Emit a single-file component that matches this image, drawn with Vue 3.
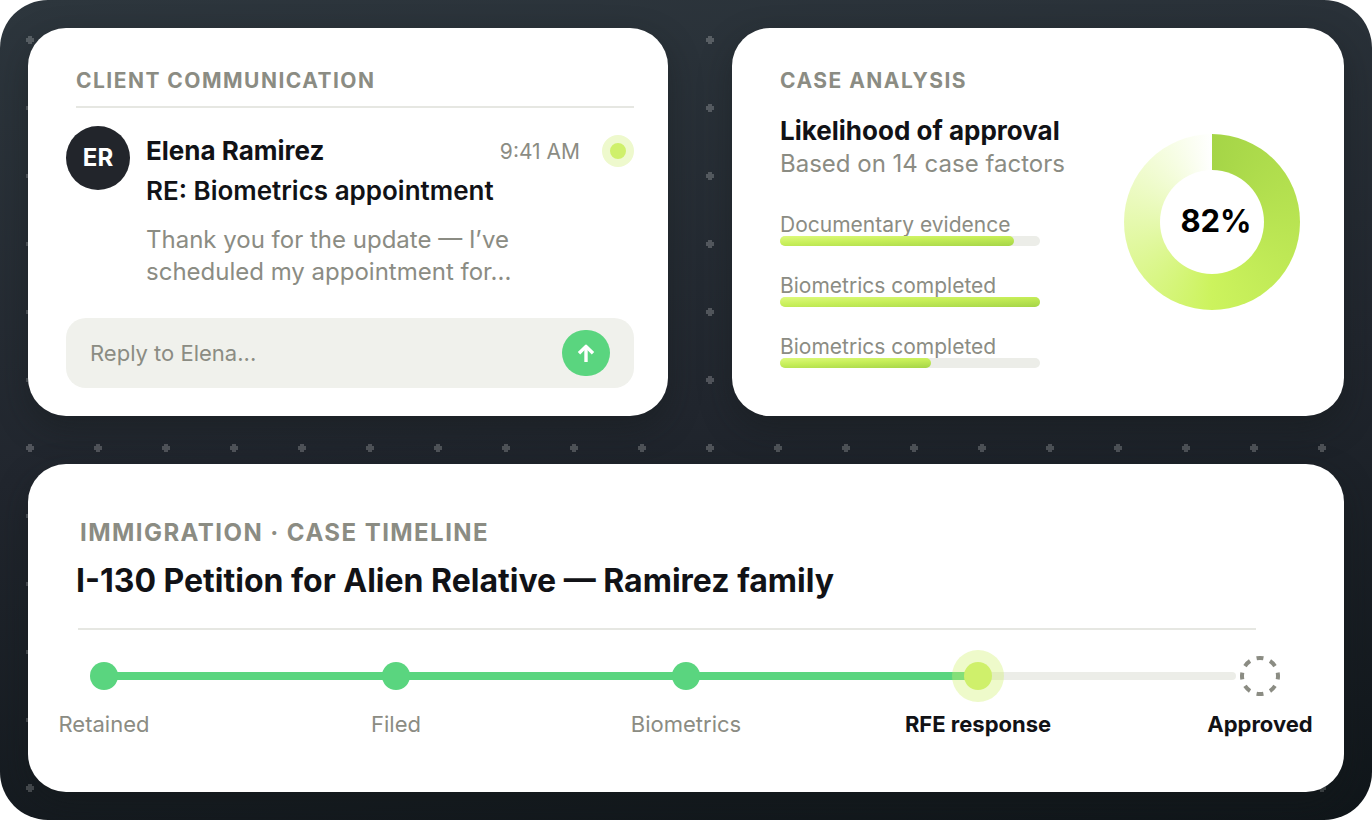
<script setup>
const factors = [
  { label: 'Documentary evidence', value: 90 },
  { label: 'Biometrics completed', value: 100 },
  { label: 'Biometrics completed', value: 58 },
]

const steps = [
  { label: 'Retained', state: 'done' },
  { label: 'Filed', state: 'done' },
  { label: 'Biometrics', state: 'done' },
  { label: 'RFE response', state: 'current' },
  { label: 'Approved', state: 'pending' },
]

const railProgress = 77
</script>

<template>
  <main class="board">
    <svg class="dots" aria-hidden="true">
      <defs>
        <pattern id="dot-grid" x="26" y="36" width="68" height="68" patternUnits="userSpaceOnUse">
          <path d="M2 0h4v2h2v4h-2v2h-4v-2h-2v-4h2z" fill="#fff" fill-opacity="0.22" shape-rendering="crispEdges" />
        </pattern>
      </defs>
      <rect width="100%" height="100%" fill="url(#dot-grid)" />
    </svg>

    <section class="card messages">
      <h2 class="eyebrow messages-title">Client communication</h2>
      <article class="message">
        <div class="avatar">ER</div>
        <div class="message-body">
          <div class="message-top">
            <h3 class="sender">Elena Ramirez</h3>
            <time class="time">9:41 AM</time>
            <span class="unread"></span>
          </div>
          <p class="subject">RE: Biometrics appointment</p>
          <p class="preview">Thank you for the update — I’ve<br />scheduled my appointment for...</p>
        </div>
      </article>
      <form class="reply" @submit.prevent>
        <input class="reply-input" type="text" aria-label="Reply to Elena" placeholder="Reply to Elena..." />
        <button class="send" type="submit" aria-label="Send reply">
          <svg width="20" height="20" viewBox="0 0 20 20" fill="none" stroke="#fff" stroke-width="3.4" aria-hidden="true">
            <path d="M10 19V3.5" />
            <path d="M3 10.3L10 3.4l7 6.9" stroke-linejoin="round" />
          </svg>
        </button>
      </form>
    </section>

    <section class="card analysis">
      <div class="analysis-main">
        <h2 class="eyebrow">Case analysis</h2>
        <h3 class="analysis-title">Likelihood of approval</h3>
        <p class="analysis-note">Based on 14 case factors</p>
        <ul class="factors">
          <li v-for="(factor, i) in factors" :key="i">
            <span :id="`factor-${i}`" class="factor-label">{{ factor.label }}</span>
            <div class="bar" role="progressbar" :aria-labelledby="`factor-${i}`" :aria-valuenow="factor.value">
              <div class="bar-fill" :style="{ width: factor.value + '%' }"></div>
            </div>
          </li>
        </ul>
      </div>
      <div class="donut"><div class="donut-hole">82%</div></div>
    </section>

    <section class="card timeline">
      <h2 class="eyebrow timeline-eyebrow">Immigration · Case timeline</h2>
      <h3 class="timeline-title">I-130 Petition for Alien Relative — Ramirez family</h3>
      <hr class="divider" />
      <ol class="steps">
        <li class="rail" aria-hidden="true">
          <div class="rail-fill" :style="{ width: railProgress + '%' }"></div>
        </li>
        <li v-for="step in steps" :key="step.label" class="step" :class="step.state">
          <div class="marker">
            <svg v-if="step.state === 'pending'" width="40" height="40" viewBox="0 0 40 40" aria-hidden="true">
              <circle cx="20" cy="20" r="18" fill="none" stroke="#8b8c83" stroke-width="4" pathLength="80" stroke-dasharray="5 5" stroke-dashoffset="2.5" />
            </svg>
            <span v-else class="node"></span>
          </div>
          <span class="step-label">{{ step.label }}</span>
        </li>
      </ol>
    </section>
  </main>
</template>

<style>
body {
  margin: 0;
  background: #fff;
}
</style>

<style scoped>
* {
  box-sizing: border-box;
}

h2,
h3,
p,
ul,
ol {
  margin: 0;
  padding: 0;
  list-style: none;
}

.board {
  position: relative;
  display: grid;
  grid-template-columns: 640fr 612fr;
  column-gap: 64px;
  row-gap: 48px;
  min-height: 100vh;
  padding: 28px;
  border-radius: 48px;
  overflow: hidden;
  background: linear-gradient(174deg, #2d363d 0%, #21262e 50%, #10161a 100%);
  font-family: Inter, "Liberation Sans", sans-serif;
  color: #111216;
}

.dots {
  position: absolute;
  inset: 0;
  width: 100%;
  height: 100%;
}

.card {
  position: relative;
  border-radius: 38px;
  background: #fff;
  box-shadow: 0 12px 32px rgba(20, 26, 24, 0.4);
}

.eyebrow {
  font-size: 21px;
  line-height: 28px;
  font-weight: 700;
  letter-spacing: 0.07em;
  text-transform: uppercase;
  color: #8b8c83;
}

.messages {
  padding: 39px 34px 28px 38px;
}

.messages-title {
  margin-left: 10px;
  padding-bottom: 11px;
  border-bottom: 2px solid #e6e7e2;
}

.message {
  display: flex;
  gap: 16px;
  margin-top: 18px;
}

.avatar {
  display: grid;
  place-items: center;
  flex: none;
  width: 64px;
  height: 64px;
  border-radius: 50%;
  background: #22252b;
  color: #fff;
  font-size: 24px;
  line-height: 28px;
  font-weight: 700;
}

.message-body {
  flex: 1;
  padding-top: 5px;
}

.message-top {
  display: flex;
  align-items: center;
}

.sender,
.subject {
  font-size: 26px;
  line-height: 40px;
}

.sender {
  font-weight: 700;
}

.subject {
  font-weight: 600;
}

.time {
  margin-left: auto;
  font-size: 21px;
  color: #8b8c83;
}

.unread {
  width: 32px;
  height: 32px;
  margin-left: 22px;
  border: 8px solid #eef9cd;
  border-radius: 50%;
  background: #cff06b;
}

.preview {
  margin-top: 13px;
  font-size: 24px;
  line-height: 32px;
  color: #8b8c83;
}

.reply {
  display: flex;
  align-items: center;
  margin-top: 30px;
  padding: 12px 24px;
  border-radius: 20px;
  background: #f0f1ec;
}

.reply-input {
  flex: 1;
  min-width: 0;
  padding: 0;
  border: 0;
  outline: 0;
  background: none;
  font: 22px/28px Inter, "Liberation Sans", sans-serif;
}

.reply-input::placeholder {
  color: #8b8c83;
  opacity: 1;
}

.send {
  display: grid;
  place-items: center;
  width: 48px;
  height: 46px;
  padding: 0;
  border: 0;
  border-radius: 24px;
  background: #5ad57f;
}

.analysis {
  display: flex;
  justify-content: space-between;
  padding: 39px 44px 28px 48px;
}

.analysis-title {
  margin-top: 20px;
  font-size: 26px;
  line-height: 32px;
  font-weight: 700;
}

.analysis-note {
  margin-top: 1px;
  font-size: 24px;
  line-height: 32px;
  color: #8b8c83;
}

.factors {
  display: grid;
  gap: 29px;
  width: 260px;
  margin-top: 34px;
}

.factor-label {
  display: block;
  font-size: 21px;
  line-height: 22px;
  color: #8b8c83;
}

.bar {
  position: relative;
  height: 10px;
  border-radius: 5px;
  background: #ecede8;
}

.bar-fill {
  height: 100%;
  border-radius: 5px;
  background: linear-gradient(178deg, #ddfa7c 0%, #c6ee58 45%, #a5d547 100%);
}

.donut {
  display: grid;
  place-items: center;
  flex: none;
  width: 176px;
  height: 176px;
  margin-top: 67px;
  border-radius: 50%;
  background: conic-gradient(#a5d547 0%, #ccf35d 50%, #fff 100%);
}

.donut-hole {
  display: grid;
  place-items: center;
  width: 104px;
  height: 104px;
  padding: 0 0 4px 8px;
  border-radius: 50%;
  background: #fff;
  color: #000;
  font-size: 31px;
  font-weight: 700;
}

.timeline {
  grid-column: 1 / -1;
  padding: 53px 0 54px;
}

.timeline-eyebrow {
  margin-left: 52px;
  font-size: 24px;
  line-height: 32px;
  letter-spacing: 0.06em;
}

.timeline-title {
  margin: 12px 88px 0 48px;
  font-size: 32px;
  line-height: 40px;
  font-weight: 700;
}

.divider {
  height: 2px;
  margin: 27px 88px 0 50px;
  border: 0;
  background: #e6e7e2;
}

.steps {
  position: relative;
  display: grid;
  grid-template-columns: 292fr 290fr 292fr 282fr 0;
  margin: 20px 84px 0 76px;
}

.rail {
  position: absolute;
  top: 22px;
  left: 0;
  right: 24px;
  height: 8px;
  border-radius: 4px;
  background: #ecede8;
}

.rail-fill {
  height: 100%;
  background: #5ad57f;
}

.step {
  position: relative;
  display: flex;
  flex-direction: column;
  align-items: center;
  width: 0;
}

.marker {
  display: grid;
  place-items: center;
  width: 52px;
  height: 52px;
  border-radius: 50%;
}

.node {
  width: 28px;
  height: 28px;
  border-radius: 50%;
  background: #5ad57f;
}

.current .marker {
  background: rgba(207, 240, 107, 0.36);
}

.current .node {
  background: #cff06b;
}

.step-label {
  margin-top: 8px;
  font-size: 22px;
  line-height: 28px;
  white-space: nowrap;
  color: #8b8c83;
}

.current .step-label,
.pending .step-label {
  font-weight: 700;
  color: #111216;
}
</style>
